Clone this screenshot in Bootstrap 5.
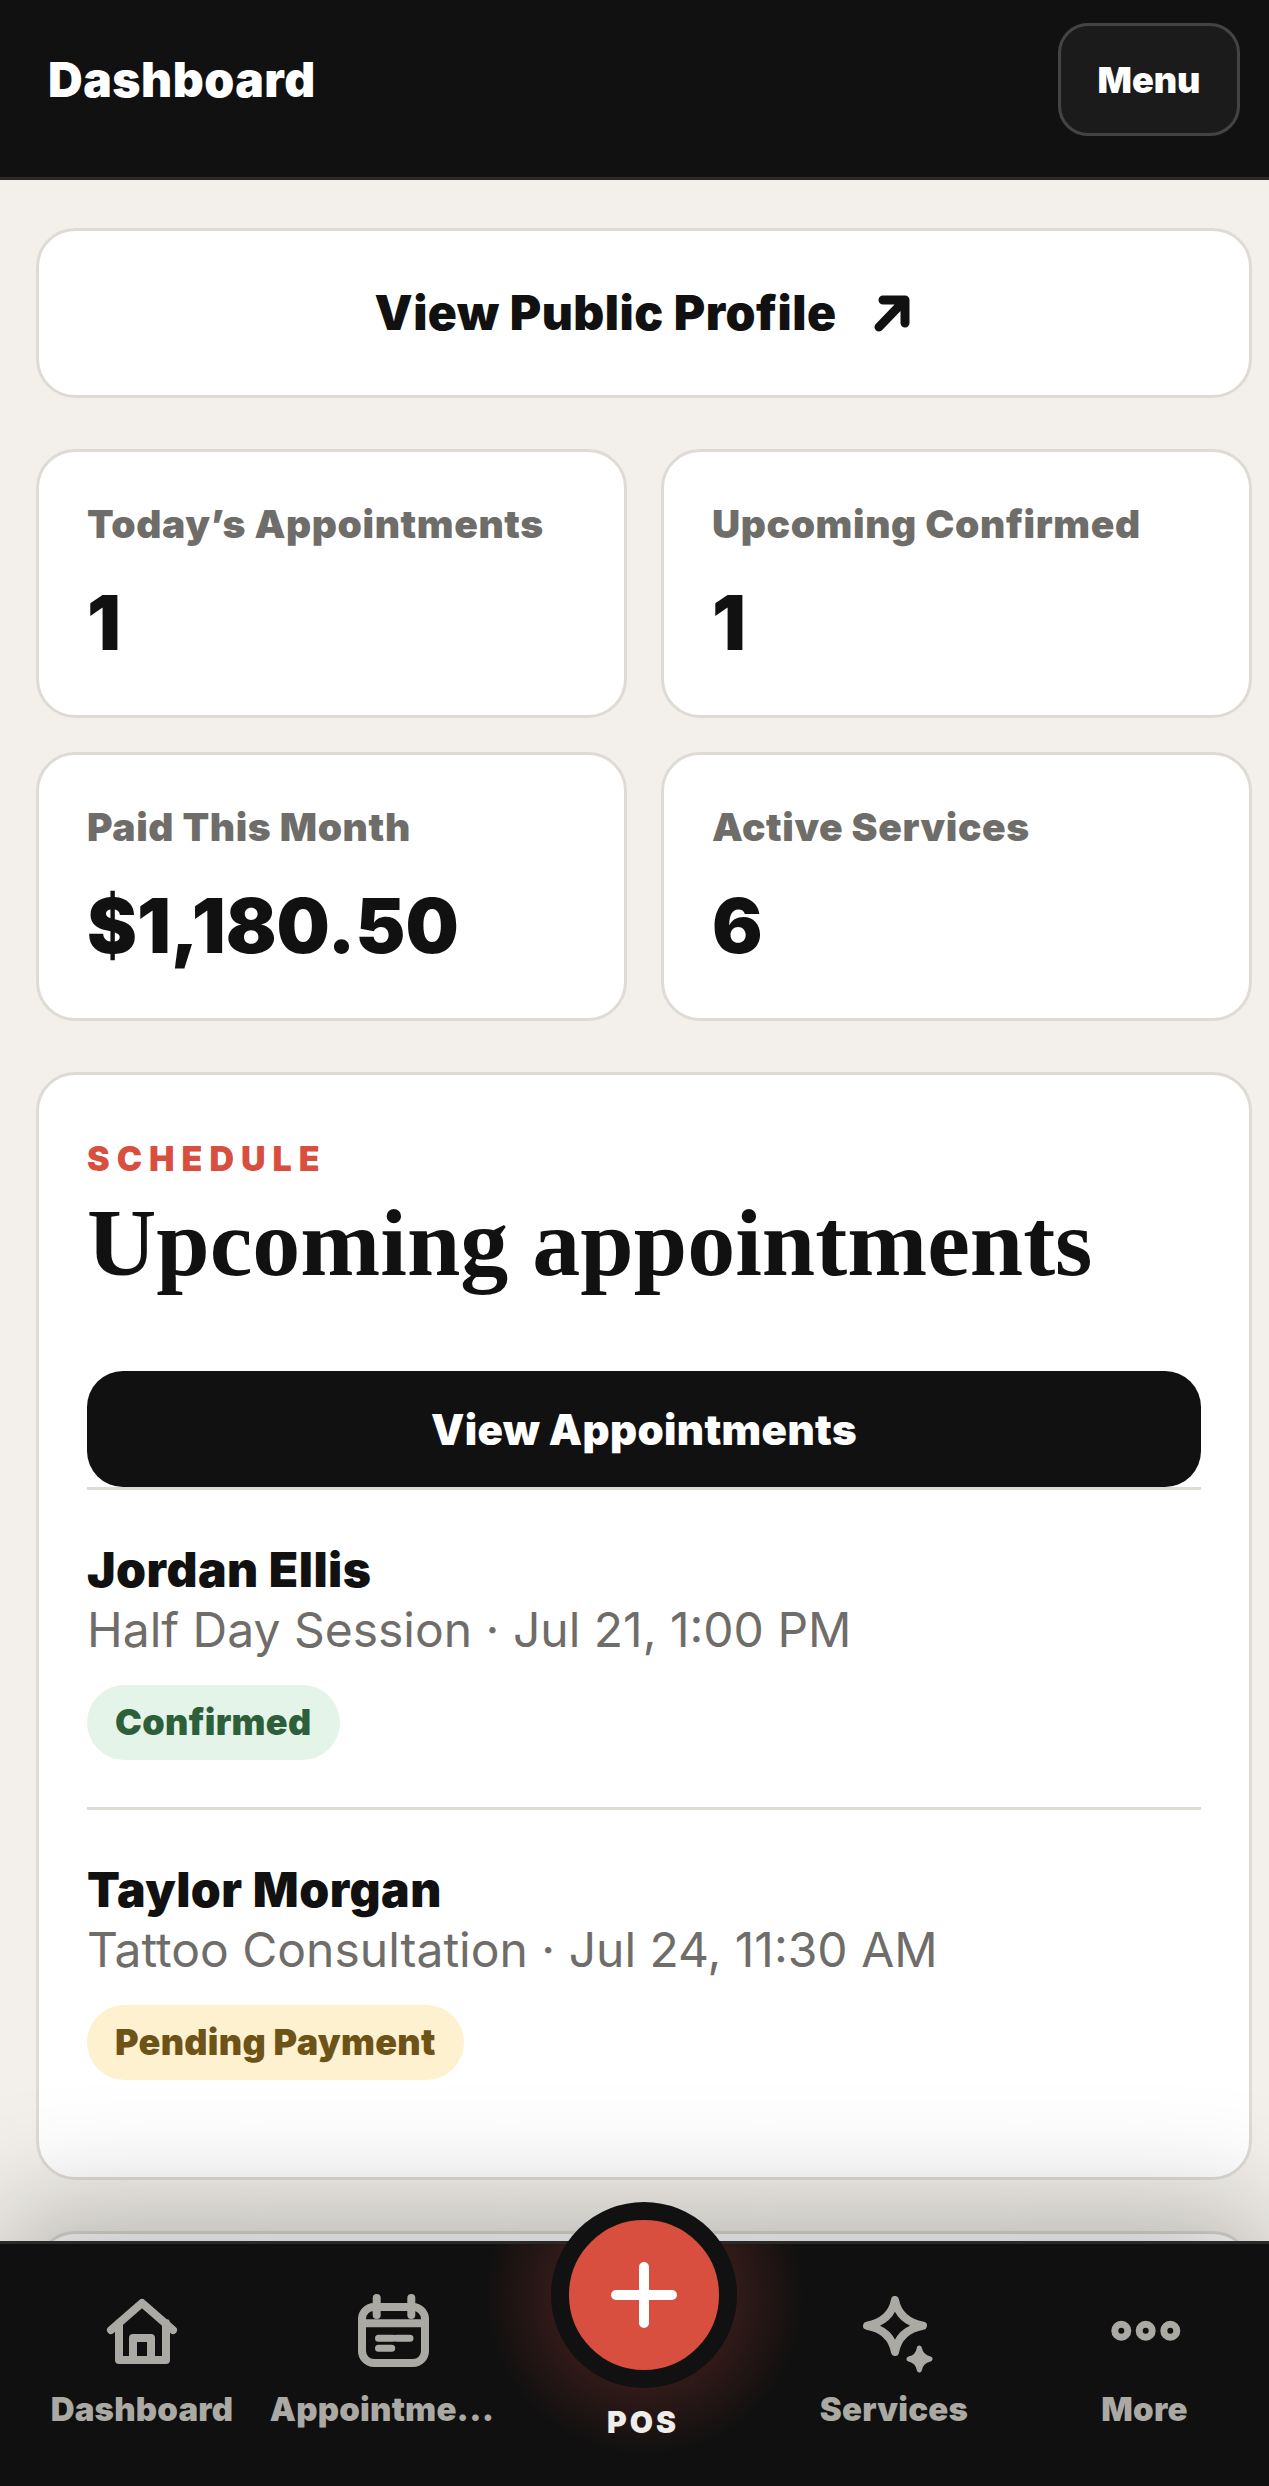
<!DOCTYPE html>
<html lang="en"><head><meta charset="utf-8"><title>Dashboard</title>
<link href="https://cdn.jsdelivr.net/npm/bootstrap@5.3.0/dist/css/bootstrap.min.css" rel="stylesheet">
<style>
html,body{height:2486px;overflow:hidden}
body{background:#f3f0eb;font-family:Inter,"Liberation Sans",sans-serif;color:#111;position:relative}
.topbar{height:180px;background:#111;border-bottom:3px solid #2c2a28;padding:0 29px 0 48px;align-items:flex-start}
.topbar h1{font-size:48px;font-weight:900;color:#fff;margin:0;line-height:54px;margin-top:53px;letter-spacing:.5px}
.menu-btn{width:182px;height:113px;margin-top:23px;background:#1b1b1b;border:3px solid #444;border-radius:30px;color:#fff;font-size:36px;font-weight:900;padding:0}
.page{padding:48px 17px 0 36px;display:flex;flex-direction:column;gap:51px}
.panel{background:#fff;border:3px solid #dedbd5;border-radius:39px}
.profile{height:170px;font-size:48px;font-weight:900;color:#111;text-decoration:none;gap:37px;letter-spacing:.5px}
.stats{display:grid;grid-template-columns:591px 591px;gap:34px 34px}
.stat{height:269px;padding:48px 48px 0}
.stat-label{font-size:39px;font-weight:900;color:#6f6d69;line-height:48px;letter-spacing:.6px}
.stat-value{font-size:75px;font-weight:900;line-height:90px;margin-top:30px;color:#111}
.schedule{height:1108px;padding:60px 48px 0;flex:none}
.next-panel{height:200px;flex:none}
.eyebrow{font-size:34px;font-weight:900;letter-spacing:7px;color:#d94f3f;line-height:48px}
.schedule h2{font-family:"Liberation Serif",serif;font-weight:700;font-size:96px;line-height:96px;margin:12px 0 80px;color:#111}
.view-btn{height:116px;background:#111;color:#fff;border:0;border-radius:36px;font-size:42px;font-weight:900;width:100%;padding:0;letter-spacing:.35px}
.appt{border-top:3px solid #dedbd5;padding:50px 0 47px}
.appt-name{font-size:48px;font-weight:900;line-height:60px;color:#111;letter-spacing:.5px}
.appt-sub{font-size:48px;font-weight:400;line-height:60px;color:#6f6d69}
.pill{display:inline-block;height:75px;line-height:75px;padding:0 28px;border-radius:38px;font-size:36px;font-weight:900;margin-top:25px;letter-spacing:.3px}
.pill-ok{background:#e4f4e9;color:#2d5f3a}
.pill-wait{background:#fdf1cf;color:#6d5318}
.tabbar{position:absolute;left:0;right:0;bottom:0;height:245px;background:radial-gradient(circle at 645px 51px,rgba(217,79,63,.17) 90px,rgba(217,79,63,0) 160px),#101010;border-top:3px solid #2c2a28;box-shadow:0 -30px 120px rgba(0,0,0,.26);display:grid;grid-template-columns:208px 272px 250px 252px 249px;padding-left:38px}
.tab{display:flex;flex-direction:column;align-items:center;color:#aba9a4;font-size:33px;line-height:40px;font-weight:900;text-decoration:none;padding-top:42px;white-space:nowrap;letter-spacing:.2px}
.tab svg{height:90px;width:90px;margin-bottom:13px;display:block;flex:none}
.tab .icon-shift{margin-left:22px}
.tab-pos{color:#efedea;position:relative;padding-top:158px;font-size:30px;letter-spacing:3px}
.fab{position:absolute;left:50%;top:-42px;width:186px;height:186px;margin-left:-92px;border-radius:50%;background:#d94f3f;border:18px solid #111;display:flex;align-items:center;justify-content:center}
.tab .fab svg{margin:0;width:66px;height:66px}
</style></head><body>
<header class="topbar d-flex justify-content-between">
<h1>Dashboard</h1>
<button class="btn menu-btn" type="button">Menu</button>
</header>
<main class="page">
<a class="panel profile d-flex align-items-center justify-content-center" href="#">View Public Profile
<svg width="40" height="40" viewBox="0 0 40 40" fill="none" stroke="#111" stroke-width="9" stroke-linecap="round" stroke-linejoin="round"><path d="M5 34 31 7M9 7h22v23"/></svg></a>
<section class="stats">
<div class="panel stat"><div class="stat-label">Today’s Appointments</div><div class="stat-value">1</div></div>
<div class="panel stat"><div class="stat-label">Upcoming Confirmed</div><div class="stat-value">1</div></div>
<div class="panel stat"><div class="stat-label">Paid This Month</div><div class="stat-value">$1,180.50</div></div>
<div class="panel stat"><div class="stat-label">Active Services</div><div class="stat-value">6</div></div>
</section>
<section class="panel schedule">
<div class="eyebrow">SCHEDULE</div>
<h2>Upcoming appointments</h2>
<button class="view-btn d-block" type="button">View Appointments</button>
<div class="appt"><div class="appt-name">Jordan Ellis</div><div class="appt-sub">Half Day Session · Jul 21, 1:00 PM</div><span class="pill pill-ok">Confirmed</span></div>
<div class="appt"><div class="appt-name">Taylor Morgan</div><div class="appt-sub">Tattoo Consultation · Jul 24, 11:30 AM</div><span class="pill pill-wait">Pending Payment</span></div>
</section>
<section class="panel next-panel"></section>
</main>
<nav class="tabbar">
<a class="tab" href="#"><svg viewBox="0 0 90 90" fill="none" stroke="currentColor" stroke-width="8" stroke-linejoin="round" stroke-linecap="round"><path d="M14 44 45 17 76 44M22 37V74H69V37M36 74V52H54V74"/></svg>Dashboard</a>
<a class="tab" href="#"><svg class="icon-shift" viewBox="0 0 90 90" fill="none" stroke="currentColor" stroke-width="8" stroke-linecap="round"><rect x="14" y="21" width="63" height="56" rx="12"/><path d="M28.700 12V29M63.300 12V29M14 37.300H77"/><path stroke-width="7" d="M30.500 52.300H45M48.500 52.300H62M30.500 62.300H43.700"/></svg>Appointme...</a>
<a class="tab tab-pos" href="#"><span class="fab"><svg viewBox="0 0 66 66" fill="none" stroke="#fff" stroke-width="10" stroke-linecap="round"><path d="M33 5V61M5 33H61"/></svg></span>POS</a>
<a class="tab" href="#"><svg viewBox="0 0 90 90" fill="none" stroke="currentColor" stroke-width="8" stroke-linejoin="round"><path d="M46 14Q50 35 74 39.700 50 44 46 66 42 44 18 39.700 42 35 46 14Z"/><path fill="currentColor" stroke-width="5" d="M70.300 62Q72 71 81 73 72 75 70.300 84 69 75 60 73 69 71 70.300 62Z"/></svg>Services</a>
<a class="tab" href="#"><svg viewBox="0 0 90 90" fill="none" stroke="currentColor" stroke-width="7"><circle cx="21.300" cy="44.700" r="6.500"/><circle cx="45.700" cy="44.700" r="6.500"/><circle cx="70.300" cy="44.700" r="6.500"/></svg>More</a>
</nav>
<script src="https://cdn.jsdelivr.net/npm/bootstrap@5.3.0/dist/js/bootstrap.bundle.min.js"></script>
</body></html>
